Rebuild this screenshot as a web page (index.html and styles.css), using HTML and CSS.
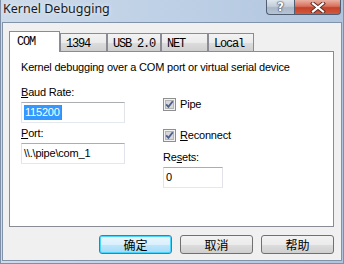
FILE: index.html
```html
<!DOCTYPE html>
<html>
<head>
    <link rel="stylesheet" href="styles.css">
</head>
<body>
    <div class="window">
        <div class="titlebar">
            <span class="title">Kernel Debugging</span>
            <div class="caption-buttons">
                <div class="cap-btn help">?</div>
                <div class="cap-btn close">
                    <svg width="16" height="11" viewBox="0 0 16 11">
                        <path d="M3 1.5 L13 9.5 M13 1.5 L3 9.5" stroke="#5a2a22" stroke-width="4" stroke-linecap="square"/>
                        <path d="M3 1.5 L13 9.5 M13 1.5 L3 9.5" stroke="#ffffff" stroke-width="2.2" stroke-linecap="square"/>
                    </svg>
                </div>
            </div>
        </div>

        <div class="client">
            <!-- Tab strip -->
            <div class="tabs">
                <div class="tab active">COM</div>
                <div class="tab w47">1394</div>
                <div class="tab w54">USB 2.0</div>
                <div class="tab w47">NET</div>
                <div class="tab w46">Local</div>
            </div>

            <div class="panel">
                <div class="desc">Kernel debugging over a COM port or virtual serial device</div>
                <div class="columns">
                    <div class="col col-left">
                        <div class="label first"><u>B</u>aud Rate:</div>
                        <div class="edit wide"><span class="sel">115200</span><span class="caret"></span></div>
                        <div class="label"><u>P</u>ort:</div>
                        <div class="edit wide">\\.\pipe\com_1</div>
                    </div>
                    <div class="col col-right">
                        <div class="check first">
                            <svg class="box" width="13" height="13" viewBox="0 0 13 13">
                                <rect x="0.5" y="0.5" width="12" height="12" fill="#f2f2f2" stroke="#8e8f8f"/>
                                <rect x="2.5" y="2.5" width="8" height="8" fill="#d8d8d8" stroke="#b4b4b4"/>
                                <path d="M3.2 6.4 L5.4 8.9 L9.8 3.2" fill="none" stroke="#4b5f8f" stroke-width="1.8"/>
                            </svg>
                            <span>Pipe</span>
                        </div>
                        <div class="check second">
                            <svg class="box" width="13" height="13" viewBox="0 0 13 13">
                                <rect x="0.5" y="0.5" width="12" height="12" fill="#f2f2f2" stroke="#8e8f8f"/>
                                <rect x="2.5" y="2.5" width="8" height="8" fill="#d8d8d8" stroke="#b4b4b4"/>
                                <path d="M3.2 6.4 L5.4 8.9 L9.8 3.2" fill="none" stroke="#4b5f8f" stroke-width="1.8"/>
                            </svg>
                            <span><u>R</u>econnect</span>
                        </div>
                        <div class="label resets">Re<u>s</u>ets:</div>
                        <div class="edit narrow">0</div>
                    </div>
                </div>
            </div>

            <div class="buttons">
                <div class="btn default">确定</div>
                <div class="btn">取消</div>
                <div class="btn">帮助</div>
            </div>
        </div>
    </div>
</body>
</html>
```

FILE: styles.css
```css
body {
    margin: 0;
    width: 344px;
    height: 264px;
    overflow: hidden;
    font-family: "Liberation Sans", Arial, sans-serif;
    font-size: 11px;
    letter-spacing: -0.2px;
    color: #000;
}

.window {
    width: 344px;
    height: 264px;
    box-sizing: border-box;
    display: flex;
    flex-direction: column;
    background: linear-gradient(90deg, #cddaea 0%, #bccfe5 55%, #b0c4dd 100%);
    border: 1px solid #7d90a8;
    border-top: none;
    padding-bottom: 2px;
}

/* Title bar */
.titlebar {
    height: 22px;
    display: flex;
    justify-content: space-between;
    align-items: flex-start;
}

.title {
    font-family: "Noto Sans", sans-serif;
    font-size: 12.5px;
    letter-spacing: 0;
    line-height: 16px;
    padding: 1px 0 0 2px;
    color: #1a1a1a;
    text-shadow: 0 0 4px rgba(255,255,255,0.8);
}

.caption-buttons {
    display: flex;
    margin-right: 2px;
}

.cap-btn {
    height: 15px;
    box-sizing: border-box;
    border: 1px solid #4f5e72;
    border-top: none;
    display: flex;
    justify-content: center;
    align-items: center;
}

.cap-btn.help {
    width: 28px;
    border-radius: 0 0 0 4px;
    border-right: none;
    background: linear-gradient(180deg, #dfe6ee 0%, #c3ceda 45%, #a9b7c8 55%, #b7c4d3 100%);
    font-family: "DejaVu Sans", sans-serif;
    font-weight: bold;
    font-size: 12px;
    letter-spacing: 0;
    line-height: 12px;
    color: #fff;
    text-shadow: 0 0 1px #3a4656, 0 0 1px #3a4656, 0 0 2px #3a4656;
}

.cap-btn.close {
    width: 47px;
    border-radius: 0 0 4px 0;
    background: linear-gradient(180deg, #eab0a2 0%, #d8705a 45%, #c4412a 55%, #d25a3e 100%);
}

/* Client area */
.client {
    flex: 1;
    margin: 0 1px;
    border: 1px solid #8193aa;
    background: #f0f0f0;
    padding: 8px 7px 6px 6px;
    display: flex;
    flex-direction: column;
}

.tabs {
    height: 20px;
    display: flex;
    align-items: flex-end;
}

.tab {
    height: 18px;
    box-sizing: border-box;
    border: 1px solid #898c95;
    border-bottom: none;
    background: linear-gradient(180deg, #f3f3f3 0%, #ebebeb 50%, #dddddd 51%, #cfcfcf 100%);
    font-family: "Liberation Mono", monospace;
    font-size: 12px;
    letter-spacing: -1.2px;
    line-height: 13px;
    padding: 4px 0 0 5px;
}

.tab.active {
    width: 51px;
    height: 21px;
    margin-bottom: -1px;
    background: #fff;
    padding: 4px 0 0 7px;
    position: relative;
    z-index: 1;
}

.tab.w46 { width: 46px; }
.tab.w47 { width: 47px; }
.tab.w54 { width: 54px; }

.panel {
    height: 176px;
    box-sizing: border-box;
    border: 1px solid #898c95;
    background: #fff;
    padding: 8px 0 0 11px;
}

.desc {
    line-height: 14px;
}

.columns {
    display: flex;
}

.col {
    display: flex;
    flex-direction: column;
    align-items: flex-start;
}

.col-left {
    width: 142px;
}

.label {
    line-height: 14px;
    margin-top: 3px;
}

.label.first {
    margin-top: 11px;
}

.edit {
    height: 21px;
    box-sizing: border-box;
    border: 1px solid #e2e3ea;
    border-top-color: #abadb3;
    border-bottom-color: #e3e9ef;
    margin-top: 3px;
    padding: 2px 0 0 2px;
    line-height: 15px;
    display: flex;
    align-items: flex-start;
}

.edit.wide { width: 104px; }
.edit.narrow { width: 60px; }

.sel {
    background: #3399ff;
    color: #fff;
    padding: 0 1px;
}

.caret {
    width: 1px;
    height: 15px;
    background: #cc6633;
}

.check {
    display: flex;
    align-items: center;
    gap: 4px;
    height: 14px;
    line-height: 14px;
}

.check.first { margin-top: 23px; }
.check.second { margin-top: 17px; }

.label.resets {
    margin-top: 8px;
}

/* Dialog buttons */
.buttons {
    margin-top: 8px;
    display: flex;
    justify-content: flex-end;
    gap: 8px;
}

.btn {
    width: 73px;
    height: 19px;
    box-sizing: border-box;
    border: 1px solid #707070;
    border-radius: 3px;
    background: linear-gradient(180deg, #f2f2f2 0%, #ebebeb 50%, #dddddd 51%, #cfcfcf 100%);
    font-family: "Noto Sans CJK SC", sans-serif;
    font-size: 12px;
    letter-spacing: 0;
    line-height: 17px;
    text-align: center;
}

.btn.default {
    border-color: #3c7fb1;
    background: linear-gradient(180deg, #eaf6fd 0%, #d9f0fc 50%, #bee6fd 51%, #a7d9f5 100%);
    box-shadow: inset 0 0 0 1px #48d4fb;
}
```
